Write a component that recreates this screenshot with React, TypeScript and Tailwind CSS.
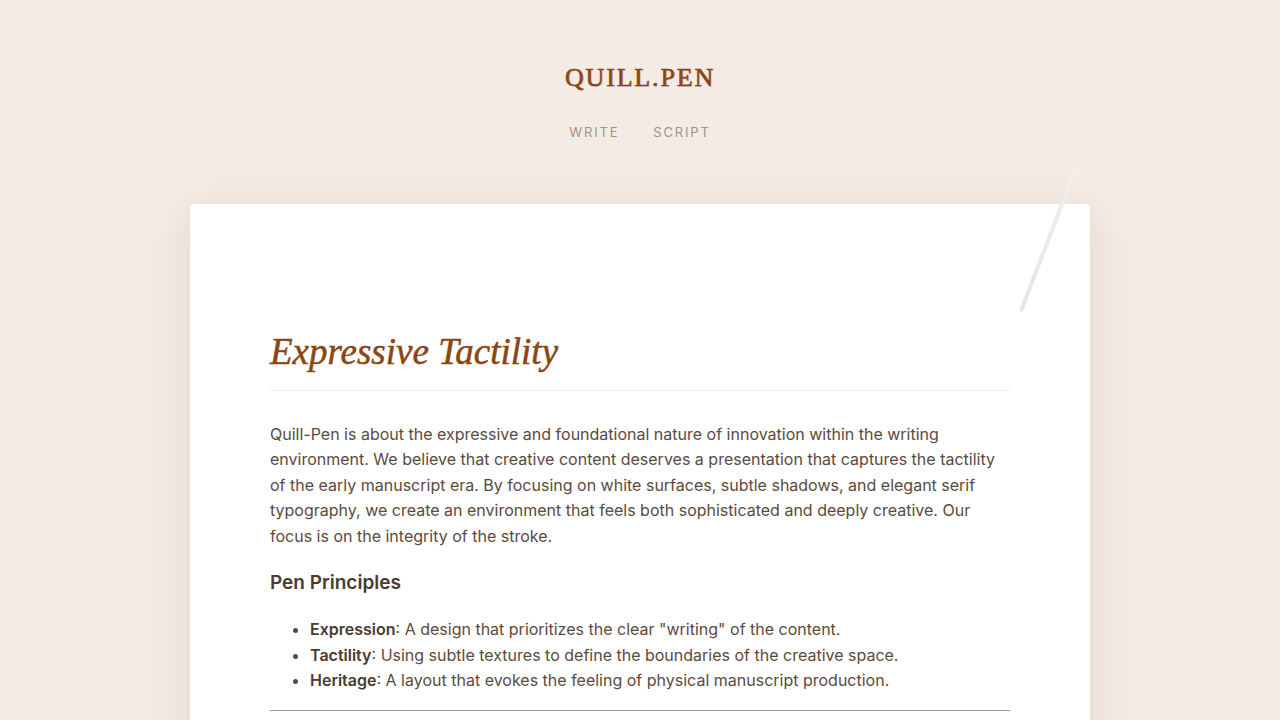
import React from "react";

export default function App() {
  return (
    <div className="min-h-screen w-full bg-[#f4ebe5] overflow-hidden" style={{ fontFamily: "Inter, 'Noto Sans', sans-serif" }}>
      <header className="flex flex-col items-center pt-[62px]">
        <h1
          className="text-[26px] leading-[32px] tracking-[0.07em] text-[#8b4513] font-normal"
          style={{ fontFamily: "'Liberation Serif', 'DejaVu Serif', serif", WebkitTextStroke: "0.6px #8b4513", textShadow: "1px 1px 0 rgba(160,120,200,0.3)" }}
        >
          QUILL.PEN
        </h1>
        <nav className="mt-[29px] flex gap-[34px] text-[13px] tracking-[0.14em] text-[#a39383]">
          <span>WRITE</span>
          <span>SCRIPT</span>
        </nav>
      </header>
      <main className="flex justify-center pt-[61px]">
        <article className="relative w-[900px] rounded-[4px] bg-white px-[80px] pt-[126px] pb-[80px] shadow-[0_10px_40px_rgba(120,90,60,0.14)]">
          <div className="absolute left-[857px] top-[-45px] h-[158px] w-[4px] rotate-[21deg] rounded-full bg-gradient-to-b from-[#f0f0f0] to-[#e4e4e4] blur-[0.7px]" />
          <h2
            className="border-b border-[#ececec] pb-[16px] text-[37px] leading-[44px] italic text-[#8b4513]"
            style={{ fontFamily: "'Liberation Serif', 'DejaVu Serif', serif", WebkitTextStroke: "0.5px #8b4513" }}
          >
            Expressive Tactility
          </h2>
          <p className="mt-[31px] text-[16px] leading-[25.5px] text-[#5b4a3e]">
            Quill-Pen is about the expressive and foundational nature of innovation within the writing environment. We believe that creative content deserves a presentation that captures the tactility of the early manuscript era. By focusing on white surfaces, subtle shadows, and elegant serif typography, we create an environment that feels both sophisticated and deeply creative. Our focus is on the integrity of the stroke.
          </p>
          <h3 className="mt-[20px] text-[19px] leading-[28px] font-semibold text-[#4a3a2f]">Pen Principles</h3>
          <ul className="mt-[20px] list-disc pl-[40px] text-[16px] leading-[25.5px] text-[#5b4a3e]">
            <li><strong className="font-semibold text-[#4a3a2f]">Expression</strong>: A design that prioritizes the clear "writing" of the content.</li>
            <li><strong className="font-semibold text-[#4a3a2f]">Tactility</strong>: Using subtle textures to define the boundaries of the creative space.</li>
            <li><strong className="font-semibold text-[#4a3a2f]">Heritage</strong>: A layout that evokes the feeling of physical manuscript production.</li>
          </ul>
          <hr className="mt-[16px] border-t border-[#9a9a9a]" />
          <div className="h-[200px]" />
        </article>
      </main>
    </div>
  );
}
